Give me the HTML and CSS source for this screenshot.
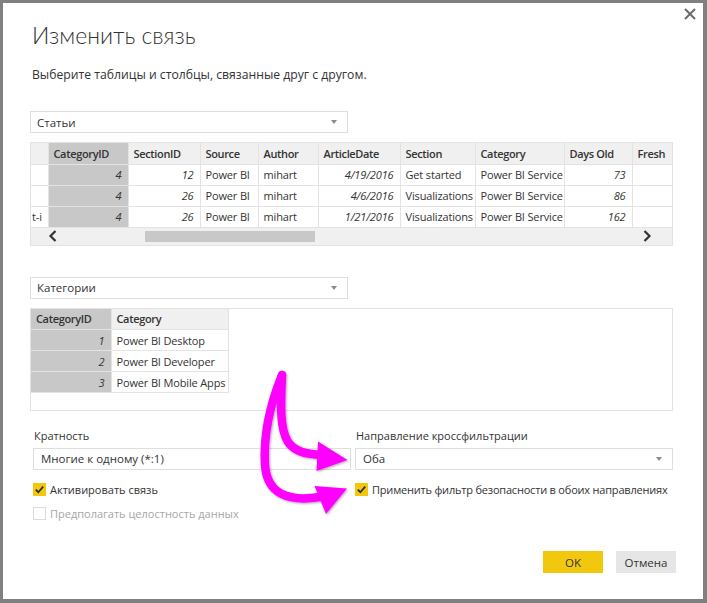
FILE: index.html
```html
<!DOCTYPE html>
<html lang="ru">
<head>
<meta charset="utf-8">
<link rel="stylesheet" href="styles.css">
</head>
<body>
<div class="dialog">
  <button class="close" aria-label="Закрыть">
    <svg width="12" height="12" viewBox="0 0 12 12"><path d="M1 1 L11 11 M11 1 L1 11" stroke="#6b6b6b" stroke-width="2" fill="none"/></svg>
  </button>
  <h1 class="title">Изменить связь</h1>
  <p class="subtitle">Выберите таблицы и столбцы, связанные друг с другом.</p>

  <div class="select select-table"><span>Статьи</span><span class="caret"></span></div>

  <div class="grid grid1">
    <table class="tbl tbl1">
      <colgroup>
        <col style="width:17px"><col style="width:80px"><col style="width:72px"><col style="width:58px"><col style="width:60px"><col style="width:82px"><col style="width:75px"><col style="width:89px"><col style="width:68px"><col style="width:40px">
      </colgroup>
      <thead>
        <tr><th></th><th class="sel">CategoryID</th><th>SectionID</th><th>Source</th><th>Author</th><th>ArticleDate</th><th>Section</th><th>Category</th><th>Days Old</th><th>Fresh</th></tr>
      </thead>
      <tbody>
        <tr><td></td><td class="sel num">4</td><td class="num">12</td><td>Power BI</td><td>mihart</td><td class="num">4/19/2016</td><td>Get started</td><td>Power BI Service</td><td class="num">73</td><td></td></tr>
        <tr><td></td><td class="sel num">4</td><td class="num">26</td><td>Power BI</td><td>mihart</td><td class="num">4/6/2016</td><td>Visualizations</td><td>Power BI Service</td><td class="num">86</td><td></td></tr>
        <tr><td class="clip">t-i</td><td class="sel num">4</td><td class="num">26</td><td>Power BI</td><td>mihart</td><td class="num">1/21/2016</td><td>Visualizations</td><td>Power BI Service</td><td class="num">162</td><td></td></tr>
      </tbody>
    </table>
    <div class="hscroll">
      <span class="chev chev-left"><svg width="10" height="12" viewBox="0 0 10 12"><path d="M7.5 1 L2.5 6 L7.5 11" stroke="#333" stroke-width="2.2" fill="none"/></svg></span>
      <span class="track"><span class="thumb"></span></span>
      <span class="chev chev-right"><svg width="10" height="12" viewBox="0 0 10 12"><path d="M2.5 1 L7.5 6 L2.5 11" stroke="#333" stroke-width="2.2" fill="none"/></svg></span>
    </div>
  </div>

  <div class="select select-table second"><span>Категории</span><span class="caret"></span></div>

  <div class="grid grid2">
    <table class="tbl tbl2">
      <colgroup><col style="width:80px"><col style="width:117px"></colgroup>
      <thead><tr><th class="sel">CategoryID</th><th>Category</th></tr></thead>
      <tbody>
        <tr><td class="sel num">1</td><td>Power BI Desktop</td></tr>
        <tr><td class="sel num">2</td><td>Power BI Developer</td></tr>
        <tr><td class="sel num">3</td><td>Power BI Mobile Apps</td></tr>
      </tbody>
    </table>
  </div>

  <div class="options">
    <div class="col">
      <div class="label">Кратность</div>
      <div class="select"><span>Многие к одному (*:1)</span></div>
      <label class="check"><span class="box on"><svg width="13" height="13" viewBox="0 0 13 13"><path d="M2.8 6.6 L5.3 9.2 L10.2 3.6" stroke="#2b2b2b" stroke-width="1.7" fill="none"/></svg></span>Активировать связь</label>
      <label class="check disabled"><span class="box"></span>Предполагать целостность данных</label>
    </div>
    <div class="col">
      <div class="label">Направление кроссфильтрации</div>
      <div class="select"><span>Оба</span><span class="caret"></span></div>
      <label class="check long"><span class="box on"><svg width="13" height="13" viewBox="0 0 13 13"><path d="M2.8 6.6 L5.3 9.2 L10.2 3.6" stroke="#2b2b2b" stroke-width="1.7" fill="none"/></svg></span>Применить фильтр безопасности в обоих направлениях</label>
    </div>
  </div>

  <div class="buttons">
    <button class="btn ok">OK</button>
    <button class="btn cancel">Отмена</button>
  </div>

  <svg class="arrows" width="110" height="165" viewBox="250 360 110 165">
    <defs>
      <filter id="sh" x="-20%" y="-20%" width="140%" height="140%">
        <feDropShadow dx="1" dy="1" stdDeviation="1.2" flood-color="#000" flood-opacity="0.35"/>
      </filter>
    </defs>
    <g filter="url(#sh)" fill="none" stroke="#ff00ff" stroke-linecap="round">
      <path d="M282 375 C281 400 279 428 288 442 C295 452 306 454 322 455" stroke-width="8.5"/>
      <path d="M282 375 C271 402 263 432 265 465 C267 494 288 502 320 497" stroke-width="8.5"/>
    </g>
    <g filter="url(#sh)" fill="#ff00ff">
      <polygon points="318,441.5 347.5,460 316.5,471"/>
      <polygon points="314.5,486 347,488.5 326,514"/>
    </g>
  </svg>
</div>
</body>
</html>
```

FILE: styles.css
```css
* { box-sizing: border-box; }
html, body { margin: 0; padding: 0; }
body {
  background: #808080;
  font-family: "Open Sans", "Noto Sans", sans-serif;
  color: #333;
  width: 707px;
  height: 603px;
  overflow: hidden;
}
.dialog {
  position: relative;
  margin: 3px 4px 4px 3px;
  width: 700px;
  height: 596px;
  background: #fff;
  padding: 18px 0 0 27px;
}
.close {
  position: absolute;
  top: 5px;
  right: 7px;
  width: 12px;
  height: 12px;
  padding: 0;
  border: 0;
  background: none;
  display: block;
}
.close svg { display: block; }
.title {
  margin: 0 0 0 2px;
  font-family: "Lato", "Open Sans", sans-serif;
  font-size: 23px;
  line-height: 28px;
  font-weight: 300;
  color: #333;
}
.subtitle {
  margin: 17px 0 0 2px;
  font-size: 12.2px;
  line-height: 18px;
  color: #333;
}
.select {
  display: flex;
  align-items: center;
  justify-content: space-between;
  height: 22px;
  border: 1px solid #dedede;
  padding: 0 10px 0 6px;
  font-size: 11.5px;
  color: #333;
  background: #fff;
}
.select-table { width: 318px; margin-top: 27px; }
.select-table.second { margin-top: 31px; }
.caret {
  width: 0; height: 0;
  border-left: 3.5px solid transparent;
  border-right: 3.5px solid transparent;
  border-top: 4px solid #8a8a8a;
}
.grid {
  margin-top: 9px;
  width: 643px;
  border: 1px solid #e3e3e3;
}
.grid1 { overflow: hidden; }
.grid2 { height: 103px; }
.tbl {
  border-collapse: collapse;
  table-layout: fixed;
  font-size: 11px;
  letter-spacing: -0.15px;
  color: #333;
}
.tbl1 { width: 641px; }
.tbl2 { width: 197px; }
.tbl th, .tbl td {
  height: 21px;
  padding: 0 5px;
  border-right: 1px solid #e3e3e3;
  border-bottom: 1px solid #e3e3e3;
  white-space: nowrap;
  overflow: hidden;
  text-align: left;
}
.tbl th {
  background: #f0f0f0;
  font-weight: 600;
  letter-spacing: -0.35px;
  color: #333;
}
.tbl .sel { background: #c8c8c8; }
.tbl .num { text-align: right; font-style: italic; padding-right: 6px; }
.tbl td.clip { text-overflow: clip; padding: 0 0 0 1px; }
.tbl1 tr > :last-child { border-right: 0; }
.hscroll {
  display: flex;
  align-items: center;
  height: 17px;
  background: #f0f0f0;
}
.chev { display: flex; align-items: center; justify-content: center; }
.chev svg { display: block; }
.chev-left { width: 37px; justify-content: flex-start; padding-left: 17px; }
.track { flex: 1; height: 11px; position: relative; }
.thumb {
  position: absolute;
  left: 77px;
  width: 170px;
  top: 0;
  height: 11px;
  background: #c8c8c8;
}
.chev-right { width: 36px; justify-content: flex-start; padding-left: 6px; }
.options {
  display: flex;
  margin-top: 17px;
  margin-left: 3px;
}
.col { width: 322px; }
.col + .col { width: 318px; }
.label {
  font-size: 11px;
  line-height: 16px;
  margin-left: 1px;
  color: #333;
}
.col .select { margin-top: 4px; width: 318px; padding-left: 7px; font-size: 11.5px; }
.check {
  display: flex;
  align-items: center;
  font-size: 11px;
  line-height: 16px;
  height: 16px;
  margin-top: 12px;
  color: #333;
  white-space: nowrap;
}
.check.long { letter-spacing: -0.2px; }
.check + .check { margin-top: 8px; }
.check.disabled { color: #a6a6a6; }
.box {
  width: 13px;
  height: 13px;
  margin-right: 4px;
  border: 1px solid #dcdcdc;
  flex: none;
}
.box.on { background: #f2c80f; border-color: #f2c80f; }
.box svg { display: block; margin: -1px; }
.buttons {
  position: absolute;
  right: 27px;
  bottom: 26px;
  display: flex;
  gap: 13px;
}
.btn {
  width: 60px;
  height: 22px;
  border: 0;
  font-family: inherit;
  font-size: 11.5px;
  color: #333;
  padding: 0;
}
.ok { background: #f2c80f; }
.cancel { background: #e6e6e6; }
.arrows {
  position: absolute;
  left: 247px;
  top: 357px;
  overflow: visible;
}
```
